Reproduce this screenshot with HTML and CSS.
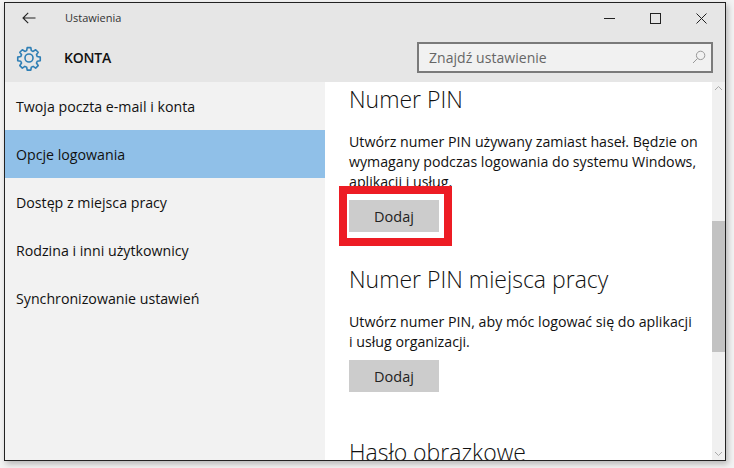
FILE: index.html
```html
<!DOCTYPE html>
<html lang="pl">
<head>
<meta charset="utf-8">
<title>Ustawienia</title>
<link rel="stylesheet" href="styles.css">
</head>
<body>
<div class="window">
  <header class="header">
    <div class="titlebar">
      <svg class="back" width="14" height="12" viewBox="0 0 14 12"><path d="M13.5 6H1M6.2 .8 1 6l5.2 5.2" fill="none" stroke="#222" stroke-width="1.1"/></svg>
      <span class="title">Ustawienia</span>
      <div class="controls">
        <svg width="11" height="11" viewBox="0 0 11 11"><path d="M0 5.5h11" stroke="#222" fill="none"/></svg>
        <svg width="11" height="11" viewBox="0 0 11 11"><rect x=".5" y=".5" width="10" height="10" stroke="#222" fill="none"/></svg>
        <svg width="11" height="11" viewBox="0 0 11 11"><path d="M.5.5l10 10M10.5.5l-10 10" stroke="#222" fill="none"/></svg>
      </div>
    </div>
    <div class="headrow">
      <svg class="gear" width="26" height="26" viewBox="0 0 26 26"><path d="M11 1.5h4l.6 3.3 2 .9 2.8-1.9 2.8 2.8-1.9 2.8.9 2 3.3.6v4l-3.3.6-.9 2 1.9 2.8-2.8 2.8-2.8-1.9-2 .9-.6 3.3h-4l-.6-3.3-2-.9-2.8 1.9-2.8-2.8 1.9-2.8-.9-2-3.3-.6v-4l3.3-.6.9-2-1.9-2.8 2.8-2.8 2.8 1.9 2-.9z" transform="translate(1.3 1.3) scale(.9)" fill="none" stroke="#2f7fb5" stroke-width="1.8" stroke-linejoin="round"/><circle cx="13" cy="13" r="4" fill="none" stroke="#2f7fb5" stroke-width="1.6"/></svg>
      <span class="section">KONTA</span>
      <div class="search">
        <span class="search-text">Znajdź ustawienie</span>
        <svg width="14" height="14" viewBox="0 0 14 14"><circle cx="8.6" cy="5.4" r="4.2" fill="none" stroke="#999"/><path d="M5.6 8.4 1 13" stroke="#999" fill="none"/></svg>
      </div>
    </div>
  </header>
  <div class="main">
    <nav class="sidebar">
      <a class="nav-item">Twoja poczta e-mail i konta</a>
      <a class="nav-item active">Opcje logowania</a>
      <a class="nav-item">Dostęp z miejsca pracy</a>
      <a class="nav-item">Rodzina i inni użytkownicy</a>
      <a class="nav-item">Synchronizowanie ustawień</a>
    </nav>
    <section class="content">
      <h2 class="h-first">Numer PIN</h2>
      <p>Utwórz numer PIN używany zamiast haseł. Będzie on<br>wymagany podczas logowania do systemu Windows,<br>aplikacji i usług.</p>
      <button class="btn">Dodaj</button>
      <h2 class="h-second">Numer PIN miejsca pracy</h2>
      <p>Utwórz numer PIN, aby móc logować się do aplikacji<br>i usług organizacji.</p>
      <button class="btn">Dodaj</button>
      <h2 class="h-third">Hasło obrazkowe</h2>
      <div class="highlight"></div>
    </section>
    <div class="scrollbar">
      <svg class="arrow" width="9" height="6" viewBox="0 0 9 6"><path d="M1 5l3.5-3.5L8 5" fill="none" stroke="#aaa"/></svg>
      <div class="thumb"></div>
      <svg class="arrow" width="9" height="6" viewBox="0 0 9 6"><path d="M1 1l3.5 3.5L8 1" fill="none" stroke="#aaa"/></svg>
    </div>
  </div>
</div>
</body>
</html>
```
FILE: styles.css
```css
* { box-sizing: border-box; }
html, body { margin: 0; padding: 0; background: #f3f3f3; }
body {
  width: 734px; height: 468px; overflow: hidden;
  padding: 2px 8px 7px 4px;
  font-family: "Open Sans", "Noto Sans", sans-serif;
  color: #111;
}
.window {
  width: 722px; height: 459px;
  border: 1px solid #222;
  box-shadow: 2px 3px 6px rgba(0,0,0,.25);
  background: #fff;
  display: flex; flex-direction: column;
}
.header { height: 79px; background: #e6e6e6; flex: none; }
.titlebar { height: 30px; display: flex; align-items: center; padding-left: 17px; }
.back { flex: none; }
.title { font-size: 11px; line-height: 14px; margin: -1px 0 0 29px; color: #333; }
.controls { margin-left: auto; display: flex; gap: 35px; padding-right: 18px; }
.headrow { height: 49px; display: flex; align-items: center; padding-left: 11px; }
.gear { flex: none; }
.section { font-size: 14px; font-weight: 600; margin-left: 22px; letter-spacing: -.2px; }
.search {
  margin-left: auto; margin-right: 12px; margin-top: -1px;
  width: 296px; height: 31px;
  border: 2px solid #7a7a7a; background: #f1f1f1;
  display: flex; align-items: center; justify-content: space-between;
  padding: 0 5px 0 10px;
}
.search-text { font-size: 14px; color: #666; letter-spacing: .05px; }
.main { flex: 1; display: flex; min-height: 0; }
.sidebar { width: 320px; background: #f2f2f2; flex: none; }
.nav-item { display: flex; align-items: center; height: 48px; padding-left: 11px; font-size: 14.2px; }
.active { background: #90c0e8; }
.content { flex: 1; position: relative; overflow: hidden; padding: 0 0 0 24px; }
h2 { font-size: 23px; font-weight: 300; margin: 0; line-height: 30px; }
.h-first { margin-top: 2px; }
.h-second { margin-top: 32px; }
.h-third { margin-top: 45px; }
p { margin: 0; font-size: 14.2px; line-height: 20px; }
.content p { margin-top: 18px; }
.btn {
  display: block; width: 90px; height: 32px; margin-top: 8px;
  border: 0; background: #cccccc; color: #222;
  font: 14.5px "Open Sans", "Noto Sans", sans-serif;
}
.highlight {
  position: absolute; left: 14px; top: 104px;
  width: 113px; height: 60px;
  border: 8px solid #ed1c24;
}
.scrollbar { width: 13px; flex: none; background: #f0f0f0; display: flex; flex-direction: column; align-items: center; justify-content: space-between; position: relative; padding: 3px 0; }
.thumb { position: absolute; left: 0; right: 0; top: 139px; height: 131px; background: #c2c2c2; }
```
